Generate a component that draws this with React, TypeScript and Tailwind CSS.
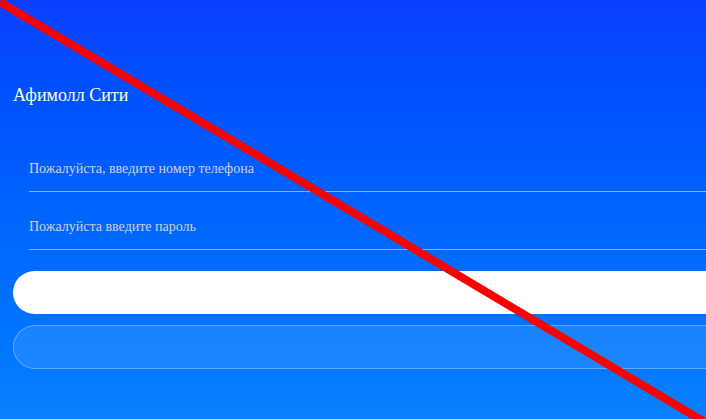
import React from "react";

export default function App() {
  const serif = { fontFamily: '"Liberation Serif", "Times New Roman", serif' };
  return (
    <div
      className="relative h-[419px] w-full overflow-hidden bg-gradient-to-b from-[#0a3fff] to-[#0a80ff]"
      style={serif}
    >
      <div className="flex w-[800px] flex-col pl-[13px] pt-[83px]">
        <h1 className="text-[18px] leading-[24px] text-white">Афимолл Сити</h1>
        <div className="mt-[27px] flex flex-col pl-4">
          <input
            className="h-[58px] w-full border-b border-white/50 bg-transparent pt-[12px] text-[14px] text-white outline-none placeholder:text-[#d0d0d8]"
            placeholder="Пожалуйста, введите номер телефона"
            style={serif}
          />
          <input
            className="h-[58px] w-full border-b border-white/50 bg-transparent pt-[12px] text-[14px] text-white outline-none placeholder:text-[#d0d0d8]"
            placeholder="Пожалуйста введите пароль"
            style={serif}
          />
        </div>
        <button className="mt-[21px] h-[43px] w-full rounded-full bg-white" />
        <button className="mt-[11px] h-[44px] w-full rounded-full border border-white/30 bg-white/10" />
      </div>
      <svg
        className="pointer-events-none absolute left-0 top-0"
        width="706"
        height="419"
        viewBox="0 0 706 419"
      >
        <line x1="0" y1="2" x2="706" y2="423" stroke="#ff0000" strokeWidth="8" />
      </svg>
    </div>
  );
}
